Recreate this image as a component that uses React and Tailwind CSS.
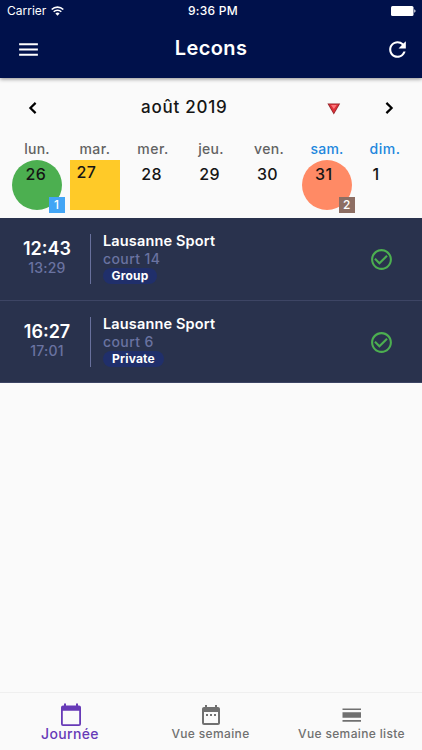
import { MdMenu, MdRefresh, MdCheckCircleOutline, MdDateRange } from "react-icons/md";

const days = [
  { name: "lun.", w: "tracking-[0.25px]", num: "26" },
  { name: "mar.", w: "tracking-[0.5px]", num: "27" },
  { name: "mer.", w: "tracking-[0.5px]", num: "28" },
  { name: "jeu.", w: "tracking-[0.3px]", num: "29" },
  { name: "ven.", w: "tracking-[0.3px]", num: "30" },
  { name: "sam.", w: "tracking-[0.2px]", num: "31", weekend: true },
  { name: "dim.", w: "tracking-[0.5px]", num: "1", weekend: true },
];

const lessons = [
  { start: "12:43", end: "13:29", place: "Lausanne Sport", court: "court 14", kind: "Group", chip: "w-[54px]" },
  { start: "16:27", end: "17:01", place: "Lausanne Sport", court: "court 6", kind: "Private", chip: "w-[61px]" },
];

function StatusBar() {
  return (
    <div className="grid h-[22px] grid-cols-3 items-center px-[7px] text-[12px] leading-[22px]">
      <div className="flex items-center gap-[5px]">
        <span>Carrier</span>
        <svg width="13" height="10" viewBox="0 0 13 10" fill="none" stroke="white" strokeWidth="1.6">
          <path d="M.7 3.5a8.2 8.2 0 0 1 11.6 0M2.7 5.8a5.3 5.3 0 0 1 7.6 0" />
          <path d="M4.4 7.6a3 3 0 0 1 4.2 0L6.5 9.7z" fill="white" stroke="none" />
        </svg>
      </div>
      <div className="pl-[4px] text-center font-medium tracking-[0.25px] whitespace-nowrap">9:36 PM</div>
      <svg className="justify-self-end -mr-[1px]" width="25" height="10" viewBox="0 0 25 10" fill="white">
        <rect width="22.5" height="10" rx="1.5" />
        <path d="M23.3 3.3c1.6.4 1.6 3 0 3.4z" />
      </svg>
    </div>
  );
}

function Chevron({ d, className }) {
  return (
    <svg className={className} width="24" height="24" viewBox="0 0 24 24" fill="none" stroke="black" strokeWidth="2.2">
      <path d={d} />
    </svg>
  );
}

function DayCell({ num }) {
  if (num === "26" || num === "31") {
    const green = num === "26";
    return (
      <div className={`relative ml-[0.5px] h-[50px] w-[50px] rounded-full pt-[4px] ${green ? "bg-[#4caf50]" : "bg-[#ff8a65]"}`}>
        <div className={`text-center leading-5 ${green ? "-ml-[3px]" : "-ml-[7px]"}`}>{num}</div>
        <div className={`absolute top-[37px] left-[36.5px] h-4 w-4 text-center text-[12px] leading-4 text-white ${green ? "bg-[#42a5f5]" : "bg-[#8d6e63]"}`}>{green ? "1" : "2"}</div>
      </div>
    );
  }
  if (num === "27") return <div className="h-[50px] w-[50px] bg-[#ffca28] pt-[2px] pl-[6.5px] leading-5">{num}</div>;
  return <div className={`w-[50px] pt-[4px] text-center leading-5 ${num === "1" ? "-ml-[18px]" : "-ml-[3px]"}`}>{num}</div>;
}

export default function App() {
  return (
    <div className="flex h-[750px] w-[422px] flex-col overflow-hidden bg-[#fafafa] font-['Inter',sans-serif]">
      <header className="z-10 h-[78px] shrink-0 bg-[#00114b] text-white shadow-[0_1px_4px_rgba(0,0,0,0.45)]">
        <StatusBar />
        <div className="flex h-[54px] items-center justify-between px-[12px]">
          <MdMenu size={25} className="ml-[4px]" />
          <h1 className="-mt-[2px] mr-[4px] text-[20px] font-semibold tracking-[0.4px]">Lecons</h1>
          <MdRefresh size={25} />
        </div>
      </header>

      <section className="h-[140px] shrink-0 px-2 text-[#151515]">
        <div className="flex h-[60px] items-center">
          <Chevron className="ml-[13px]" d="M14.6 6.9 9.4 12l5.2 5.1" />
          <div className="ml-[96px] w-[90px] text-[17px] font-medium tracking-[0.75px] whitespace-nowrap">août 2019</div>
          <svg className="ml-[96px] mt-[2px]" width="14" height="12" viewBox="0 0 14 12">
            <path d="M.4.5h12.8L6.8 11.5z" fill="#93282d" />
            <path d="M1.8 1.3h10L6.8 10z" fill="#dd3038" />
            <path d="M4 2.1h5.7L6.9 6z" fill="#ff777b" />
          </svg>
          <Chevron className="ml-[36px]" d="m9.4 6.9 5.2 5.1-5.2 5.1" />
        </div>
        <div className="grid grid-cols-[repeat(7,58px)] text-[14px] font-medium">
          {days.map((d) => (
            <div key={d.name} className={`h-[22px] text-center leading-[22px] ${d.w} ${d.weekend ? "text-[#2287dd]" : "text-[#626262]"}`}>{d.name}</div>
          ))}
        </div>
        <div className="grid grid-cols-[repeat(7,58px)] justify-items-center text-[16px] font-medium tracking-[0.3px]">
          {days.map((d) => <DayCell key={d.num} num={d.num} />)}
        </div>
      </section>

      <main className="shrink-0 text-white">
        {lessons.map((l) => (
          <article key={l.start} className="flex h-[82.5px] items-start border-b border-[#3d4564] bg-[#29324d] pt-4">
            <div className="w-[90px] pt-[5px] pl-[4px] text-center">
              <div className="text-[18px] leading-[19px] font-semibold">{l.start}</div>
              <div className="text-[14px] leading-[19px] font-medium tracking-[0.2px] text-[#6a73a1]">{l.end}</div>
            </div>
            <div className="h-[50px] w-px bg-[#68709c]" />
            <div className="ml-[12px] w-[265.5px] -mt-[2px]">
              <div className="text-[14.5px] leading-[18px] font-semibold tracking-[0.15px]">{l.place}</div>
              <div className="text-[14px] leading-[17px] font-medium tracking-[0.4px] text-[#6a73a1]">{l.court}</div>
              <div className={`mt-px h-4 rounded-full bg-[#202f6b] text-center text-[12px] leading-[15px] font-bold tracking-[0.2px] ${l.chip}`}>{l.kind}</div>
            </div>
            <MdCheckCircleOutline size={25} className="mt-[13px] text-[#4caf50]" />
          </article>
        ))}
      </main>

      <nav className="mt-auto grid h-[58px] grid-cols-[140px_141px_141px] border-t border-[#efefef] text-[#707070]">
        <div className="flex flex-col items-center pt-[10px] text-[#673ab7]">
          <svg width="24" height="24" viewBox="0 0 24 24" fill="currentColor" className="ml-px">
            <path fillRule="evenodd" d="M5 .5h2v2h10v-2h2v2h1a2 2 0 0 1 2 2V21a2 2 0 0 1-2 2H4a2 2 0 0 1-2-2V4.5a2 2 0 0 1 2-2h1zM3.8 7.7v13.5h16.4V7.7z" />
          </svg>
          <span className="-mt-[2px] text-[14px] leading-[18px] font-medium tracking-[0.35px]">Journée</span>
        </div>
        <div className="flex flex-col items-center pt-[10px]">
          <MdDateRange size={24} className="ml-px" />
          <span className="-mt-px text-[12px] leading-[16px] font-medium tracking-[0.35px]">Vue semaine</span>
        </div>
        <div className="flex flex-col items-center pt-[10px]">
          <svg width="24" height="24" viewBox="0 0 24 24" fill="currentColor">
            <path d="M2.5 5.5H21V7H2.5zM2.5 9.3H21v5.5H2.5zM2.5 17H21v1.8H2.5z" />
          </svg>
          <span className="-mt-px text-[12px] leading-[16px] font-medium tracking-[0.35px]">Vue semaine liste</span>
        </div>
      </nav>
    </div>
  );
}
